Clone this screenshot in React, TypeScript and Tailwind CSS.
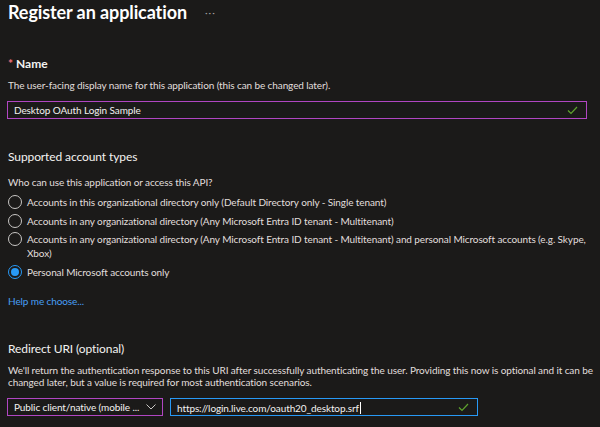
import React from 'react';

const font = { fontFamily: 'Lato, "Liberation Sans", sans-serif' };

const Check = () => (
  <svg width="11" height="9" viewBox="0 0 11 9" fill="none">
    <path d="M1 4.5 L4 7.5 L10 1" stroke="#5fa32e" strokeWidth="1.2" />
  </svg>
);

const Radio = ({ checked }: { checked?: boolean }) => (
  <span
    className={`flex h-[14px] w-[14px] shrink-0 items-center justify-center rounded-full border ${
      checked ? 'border-[#2899f5]' : 'border-[#c8c6c4]'
    }`}
  >
    {checked && <span className="h-[8px] w-[8px] rounded-full bg-[#2899f5]" />}
  </span>
);

const options: { label: React.ReactNode; checked?: boolean }[] = [
  { label: 'Accounts in this organizational directory only (Default Directory only - Single tenant)' },
  { label: 'Accounts in any organizational directory (Any Microsoft Entra ID tenant - Multitenant)' },
  {
    label: (
      <>
        Accounts in any organizational directory (Any Microsoft Entra ID tenant - Multitenant) and personal Microsoft accounts (e.g. Skype,
        <br />
        Xbox)
      </>
    ),
  },
  { label: 'Personal Microsoft accounts only', checked: true },
];

export default function App() {
  return (
    <div className="h-[427px] w-[600px] overflow-hidden bg-[#1b1a19] px-2 text-[#f3f2f1]" style={font}>
      {/* Header */}
      <div className="flex items-center gap-[18px]">
        <h1 className="text-[18px] font-bold leading-[24px] tracking-[-0.1px] text-white">Register an application</h1>
        <span className="text-[10px] tracking-[1px] text-[#a19f9d]">···</span>
      </div>

      {/* Name */}
      <div className="mt-[32px]">
        <div className="text-[12px] font-bold leading-[16px]">
          <span className="text-[#f1707b]">*</span> Name
        </div>
        <p className="mt-[6px] whitespace-nowrap text-[10px] leading-[14px] tracking-[-0.1px] text-[#e1dfdd]">
          The user-facing display name for this application (this can be changed later).
        </p>
        <div className="mt-[9px] -ml-[1px] flex h-[18px] w-[580px] items-center justify-between border border-[#b146c2] bg-[#1b1a19] pl-[6px] pr-[8px]">
          <span className="text-[10px] leading-[14px] tracking-[-0.1px]">Desktop OAuth Login Sample</span>
          <Check />
        </div>
      </div>

      {/* Supported account types */}
      <div className="mt-[30px]">
        <div className="text-[12px] leading-[16px] tracking-[-0.1px]">Supported account types</div>
        <p className="mt-[10px] text-[10px] leading-[14px] tracking-[-0.1px] text-[#e1dfdd]">Who can use this application or access this API?</p>
        <div className="mt-[6px] flex flex-col gap-[4.5px]">
          {options.map((o, i) => (
            <label key={i} className="flex items-start gap-[5px] whitespace-nowrap text-[10px] leading-[14px] tracking-[-0.1px] text-[#e1dfdd]">
              <Radio checked={o.checked} />
              <span>{o.label}</span>
            </label>
          ))}
        </div>
        <a className="mt-[15.5px] block text-[10px] leading-[14px] tracking-[-0.1px] text-[#479ef5]">Help me choose...</a>
      </div>

      {/* Redirect URI */}
      <div className="mt-[33px]">
        <div className="text-[12px] leading-[16px] tracking-[-0.1px]">Redirect URI (optional)</div>
        <p className="mt-[7px] whitespace-nowrap text-[10px] leading-[12px] tracking-[-0.1px] text-[#e1dfdd]">
          We'll return the authentication response to this URI after successfully authenticating the user. Providing this now is optional and it can be
          <br />
          changed later, but a value is required for most authentication scenarios.
        </p>
        <div className="mt-[10px] -ml-[1px] flex items-center gap-[7px]">
          <div className="flex h-[18px] w-[156px] items-center justify-between border border-[#b146c2] pl-[6px] pr-[6px]">
            <span className="whitespace-nowrap text-[10px] leading-[14px] tracking-[-0.1px]">Public client/native (mobile ...</span>
            <svg width="10" height="6" viewBox="0 0 10 6" fill="none">
              <path d="M0.5 0.5 L5 5 L9.5 0.5" stroke="#c8c6c4" strokeWidth="1" />
            </svg>
          </div>
          <div className="flex h-[18px] w-[308px] items-center justify-between border border-[#2899f5] pl-[6px] pr-[8px]">
            <span className="whitespace-nowrap text-[10px] leading-[14px] tracking-[-0.1px]">
              https://login.live.com/oauth20_desktop.srf
              <span className="ml-[1px] inline-block h-[12px] w-[1px] translate-y-[2px] bg-white" />
            </span>
            <Check />
          </div>
        </div>
      </div>
    </div>
  );
}
